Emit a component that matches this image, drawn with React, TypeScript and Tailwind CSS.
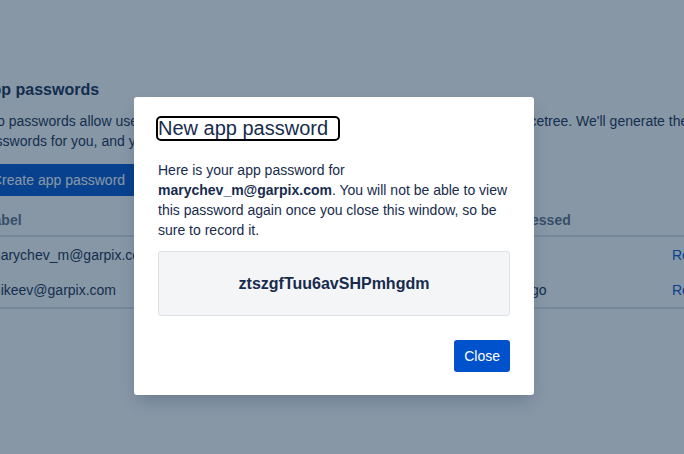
import React from "react";

const font = { fontFamily: '"Liberation Sans", Arial, sans-serif' };

const rows = [
  { label: "marychev_m@garpix.com", created: "Today", accessed: "Today" },
  { label: "mikeev@garpix.com", created: "2 days ago", accessed: "2 days ago" },
];

const Page = () => (
  <div className="ml-[-20px] w-[740px] pt-[80px] text-[#172b4d]">
    <h2 className="text-base font-bold leading-5">App passwords</h2>
    <p className="mt-[11px] text-sm leading-5">
      App passwords allow users to access their Bitbucket account through apps such as Sourcetree. We'll generate the app
      passwords for you, and you won't need to remember them.
    </p>
    <button className="mt-[13px] h-8 rounded-[3px] bg-[#0052cc] px-3 text-sm text-white">Create app password</button>
    <table className="mt-[13px] w-full table-fixed text-sm">
      <thead>
        <tr className="border-b-2 border-[#dfe1e6] text-left text-[#5e6c84]">
          <th className="h-[27px] w-[250px] pt-px pl-[5px] align-top font-bold">Label</th>
          <th className="w-[239px] pt-px pl-[5px] align-top font-bold">Created</th>
          <th className="w-[194px] pt-px pl-[6px] align-top font-bold">Last accessed</th>
          <th></th>
        </tr>
      </thead>
      <tbody className="border-b-2 border-[#dfe1e6]">
        {rows.map((r) => (
          <tr key={r.label}>
            <td className="h-9 pl-[9px]">{r.label}</td>
            <td className="pl-[9px]">{r.created}</td>
            <td className="pl-[9px]">{r.accessed}</td>
            <td className="pl-[9px] text-[#0052cc]">Revoke</td>
          </tr>
        ))}
      </tbody>
    </table>
  </div>
);

export default function App() {
  return (
    <div className="relative h-[454px] w-[684px] overflow-hidden bg-white" style={font}>
      <Page />
      <div className="absolute inset-0 flex items-start justify-center bg-[rgba(15,47,77,0.5)] pt-[97px] pr-4">
        <div className="w-[400px] rounded-[3px] bg-white px-6 pt-[21px] pb-[23px] shadow-[0_8px_16px_-4px_rgba(9,30,66,0.25)]">
          <h1 className="inline-block rounded-[3px] pr-[10px] text-xl leading-[21px] text-[#172b4d] outline-2 outline-black">
            New app password
          </h1>
          <p className="mt-[18px] whitespace-nowrap text-sm leading-5 text-[#172b4d]">
            Here is your app password for
            <br />
            <strong className="font-bold">marychev_m@garpix.com</strong>. You will not be able to view
            <br />
            this password again once you close this window, so be
            <br />
            sure to record it.
          </p>
          <div className="mt-[11px] flex h-[65px] items-center justify-center rounded-[3px] border border-[#dfe1e6] bg-[#f4f5f7] text-base font-bold text-[#172b4d]">
            ztszgfTuu6avSHPmhgdm
          </div>
          <div className="mt-6 flex justify-end">
            <button className="h-8 rounded-[3px] bg-[#0052cc] px-[10px] text-sm text-white">Close</button>
          </div>
        </div>
      </div>
    </div>
  );
}
